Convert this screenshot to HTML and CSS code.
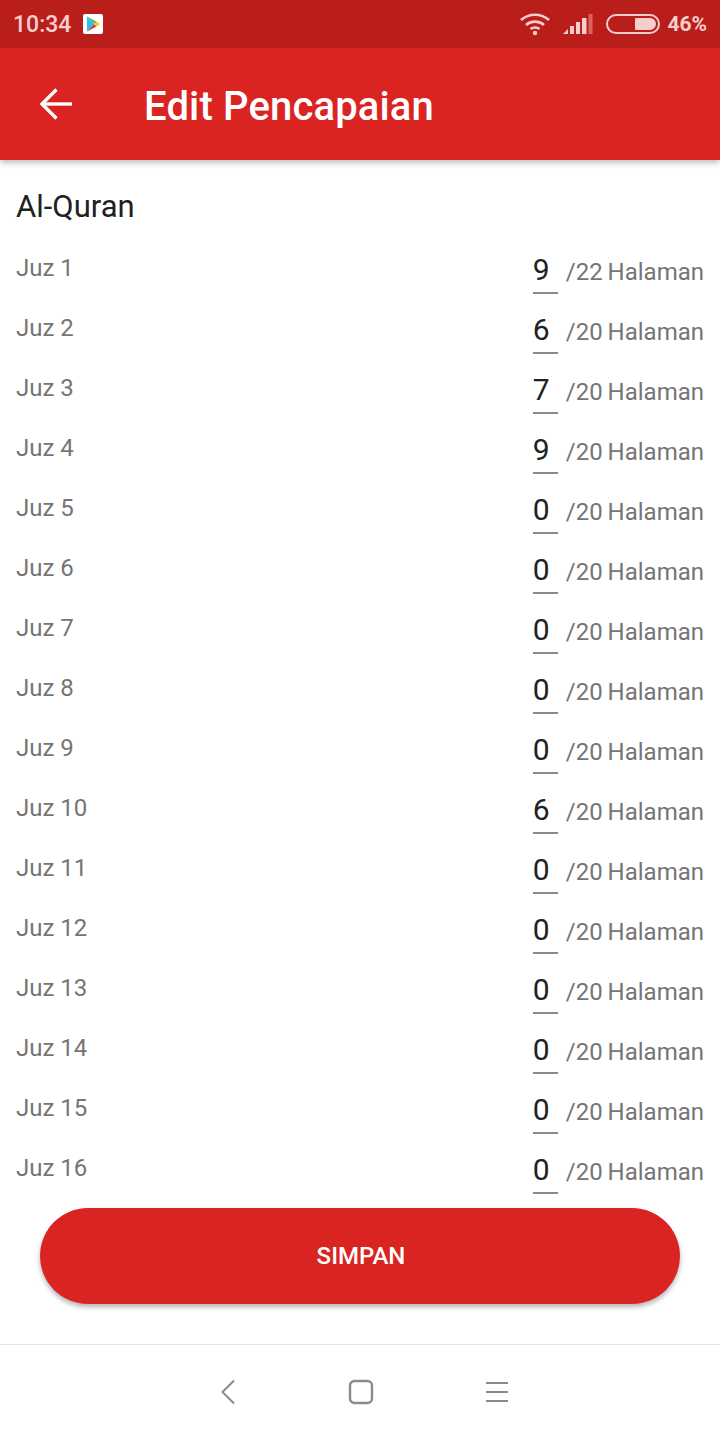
FILE: index.html
```html
<!DOCTYPE html>
<html lang="en">
<head>
  <meta charset="UTF-8" />
  <meta name="viewport" content="width=device-width, initial-scale=1.0"/>
  <title>Edit Pencapaian</title>
  <link rel="stylesheet" href="styles.css">
</head>
<body>
  <div class="screen">
    <div class="statusbar">
      <div class="status-left">
        <span class="clock">10:34</span>
        <span class="play-badge">
          <svg width="14" height="16" viewBox="0 0 14 16">
            <path d="M1 0.5 L8 8 L1 15.5 Z" fill="#22c4e8"/>
            <path d="M1 0.5 L10.5 5.6 L8 8 Z" fill="#4fbf6b"/>
            <path d="M1 15.5 L10.5 10.4 L8 8 Z" fill="#d9354a"/>
            <path d="M10.5 5.6 L14 8 L10.5 10.4 L8 8 Z" fill="#f8c51c"/>
          </svg>
        </span>
      </div>
      <div class="status-right">
        <svg class="wifi" width="32" height="24" viewBox="0 0 32 24" fill="none" stroke="#f6cfcd" stroke-width="2.6">
          <path d="M2 8 C10 1 22 1 30 8"/>
          <path d="M7 13 C12 8.5 20 8.5 25 13"/>
          <path d="M11.5 17 C14 15 18 15 20.5 17"/>
          <circle cx="16" cy="21" r="2.2" fill="#f6cfcd" stroke="none"/>
        </svg>
        <svg class="signal" width="30" height="20" viewBox="0 0 30 20">
          <path d="M0 20 L5 15 V20 Z" fill="#f6cfcd"/>
          <rect x="7" y="12" width="4" height="8" fill="#f6cfcd"/>
          <rect x="13" y="8" width="4" height="12" fill="#f6cfcd"/>
          <rect x="19" y="4" width="4.5" height="16" fill="#f6cfcd"/>
          <rect x="25.5" y="0" width="4" height="20" fill="#d9635f"/>
        </svg>
        <span class="battery"><span class="battery-fill"></span></span>
        <span class="percent">46%</span>
      </div>
    </div>

    <div class="toolbar">
      <svg class="back-arrow" width="36" height="36" viewBox="0 0 36 36" fill="none" stroke="#fff" stroke-width="3.4">
        <path d="M33 18 H4"/>
        <path d="M17.5 3.5 L3 18 L17.5 32.5"/>
      </svg>
      <h1>Edit Pencapaian</h1>
    </div>

    <div class="content">
      <h2>Al-Quran</h2>
      <div class="juz-list">
        <div class="juz-row"><span class="juz-name">Juz 1</span><span class="juz-value">9</span><span class="juz-total">/22 Halaman</span></div>
        <div class="juz-row"><span class="juz-name">Juz 2</span><span class="juz-value">6</span><span class="juz-total">/20 Halaman</span></div>
        <div class="juz-row"><span class="juz-name">Juz 3</span><span class="juz-value">7</span><span class="juz-total">/20 Halaman</span></div>
        <div class="juz-row"><span class="juz-name">Juz 4</span><span class="juz-value">9</span><span class="juz-total">/20 Halaman</span></div>
        <div class="juz-row"><span class="juz-name">Juz 5</span><span class="juz-value">0</span><span class="juz-total">/20 Halaman</span></div>
        <div class="juz-row"><span class="juz-name">Juz 6</span><span class="juz-value">0</span><span class="juz-total">/20 Halaman</span></div>
        <div class="juz-row"><span class="juz-name">Juz 7</span><span class="juz-value">0</span><span class="juz-total">/20 Halaman</span></div>
        <div class="juz-row"><span class="juz-name">Juz 8</span><span class="juz-value">0</span><span class="juz-total">/20 Halaman</span></div>
        <div class="juz-row"><span class="juz-name">Juz 9</span><span class="juz-value">0</span><span class="juz-total">/20 Halaman</span></div>
        <div class="juz-row"><span class="juz-name">Juz 10</span><span class="juz-value">6</span><span class="juz-total">/20 Halaman</span></div>
        <div class="juz-row"><span class="juz-name">Juz 11</span><span class="juz-value">0</span><span class="juz-total">/20 Halaman</span></div>
        <div class="juz-row"><span class="juz-name">Juz 12</span><span class="juz-value">0</span><span class="juz-total">/20 Halaman</span></div>
        <div class="juz-row"><span class="juz-name">Juz 13</span><span class="juz-value">0</span><span class="juz-total">/20 Halaman</span></div>
        <div class="juz-row"><span class="juz-name">Juz 14</span><span class="juz-value">0</span><span class="juz-total">/20 Halaman</span></div>
        <div class="juz-row"><span class="juz-name">Juz 15</span><span class="juz-value">0</span><span class="juz-total">/20 Halaman</span></div>
        <div class="juz-row"><span class="juz-name">Juz 16</span><span class="juz-value">0</span><span class="juz-total">/20 Halaman</span></div>
      </div>
    </div>

    <div class="actions">
      <button type="button" class="save-btn">SIMPAN</button>
    </div>

    <div class="navbar">
      <svg width="16" height="28" viewBox="0 0 16 28" fill="none" stroke="#8a8a8a" stroke-width="2">
        <path d="M14 2.5 L2.5 14 L14 25.5"/>
      </svg>
      <svg width="26" height="26" viewBox="0 0 26 26" fill="none" stroke="#8a8a8a" stroke-width="2.4">
        <rect x="2" y="2" width="22" height="22" rx="4.5"/>
      </svg>
      <svg width="24" height="24" viewBox="0 0 24 24" fill="none" stroke="#8a8a8a" stroke-width="2">
        <path d="M0 3 H22"/>
        <path d="M0 12 H22"/>
        <path d="M0 21 H22"/>
      </svg>
    </div>
  </div>
</body>
</html>
```

FILE: styles.css
```css
body {
  margin: 0;
  background-color: #fff;
  font-family: Roboto, "Liberation Sans", sans-serif;
}
.screen {
  width: 720px;
  height: 1440px;
  display: flex;
  flex-direction: column;
  overflow: hidden;
}

.statusbar {
  height: 48px;
  flex: none;
  padding: 0 13px;
  box-sizing: border-box;
  display: flex;
  align-items: center;
  justify-content: space-between;
  background-color: #ba1e1a;
  color: #f6cfcd;
  font-size: 23px;
  font-weight: 500;
}
.status-left, .status-right {
  display: flex;
  align-items: center;
}
.play-badge {
  width: 20px;
  height: 20px;
  margin-left: 12px;
  border-radius: 2px;
  background-color: #fff;
  display: flex;
  align-items: center;
  justify-content: center;
}
.wifi {
  margin-right: 12px;
}
.signal {
  margin-right: 13px;
}
.battery {
  width: 54px;
  height: 20px;
  box-sizing: border-box;
  padding: 2px;
  border: 2px solid #f6cfcd;
  border-radius: 10px;
  display: flex;
  justify-content: flex-end;
}
.battery-fill {
  width: 21px;
  background-color: #f6cfcd;
  border-radius: 1px 6px 6px 1px;
}
.percent {
  margin-left: 7px;
  font-size: 21px;
  font-weight: 700;
}

.toolbar {
  height: 112px;
  flex: none;
  box-sizing: border-box;
  padding-left: 39px;
  display: flex;
  align-items: center;
  background-color: #da2422;
  box-shadow: 0 3px 6px rgba(0, 0, 0, 0.25);
  position: relative;
}
.toolbar h1 {
  margin: 0 0 0 69px;
  padding-top: 4px;
  color: #fff;
  font-size: 40px;
  font-weight: 500;
  letter-spacing: 0.15px;
}

.content {
  height: 1036px;
  flex: none;
  box-sizing: border-box;
  padding: 0 16px;
  overflow: hidden;
}
.content h2 {
  margin: 28px 0 12px;
  height: 38px;
  line-height: 38px;
  font-size: 31px;
  font-weight: 400;
  color: #212121;
}
.juz-row {
  height: 60px;
  display: flex;
  align-items: flex-start;
}
.juz-name {
  flex: 1;
  margin-top: 16px;
  line-height: 28px;
  font-size: 24px;
  color: #757575;
}
.juz-value {
  width: 25px;
  height: 48px;
  margin-top: 8px;
  box-sizing: border-box;
  border-bottom: 2px solid #8a8a8a;
  line-height: 48px;
  font-size: 30px;
  color: #212121;
}
.juz-total {
  margin-left: 8px;
  margin-top: 19px;
  line-height: 30px;
  font-size: 24px;
  word-spacing: -1px;
  color: #757575;
}

.actions {
  height: 149px;
  flex: none;
  box-sizing: border-box;
  padding: 12px 40px 0;
  border-bottom: 1px solid #e3e3e3;
}
.save-btn {
  width: 100%;
  height: 96px;
  padding-left: 8px;
  border: none;
  border-radius: 48px;
  background-color: #da2422;
  color: #fff;
  font-family: inherit;
  font-size: 24px;
  font-weight: 500;
  box-shadow: 0 3px 5px rgba(0, 0, 0, 0.3);
}

.navbar {
  flex: 1;
  display: flex;
  align-items: center;
  justify-content: center;
  gap: 112px;
  padding-left: 10px;
  padding-bottom: 1px;
}
```
